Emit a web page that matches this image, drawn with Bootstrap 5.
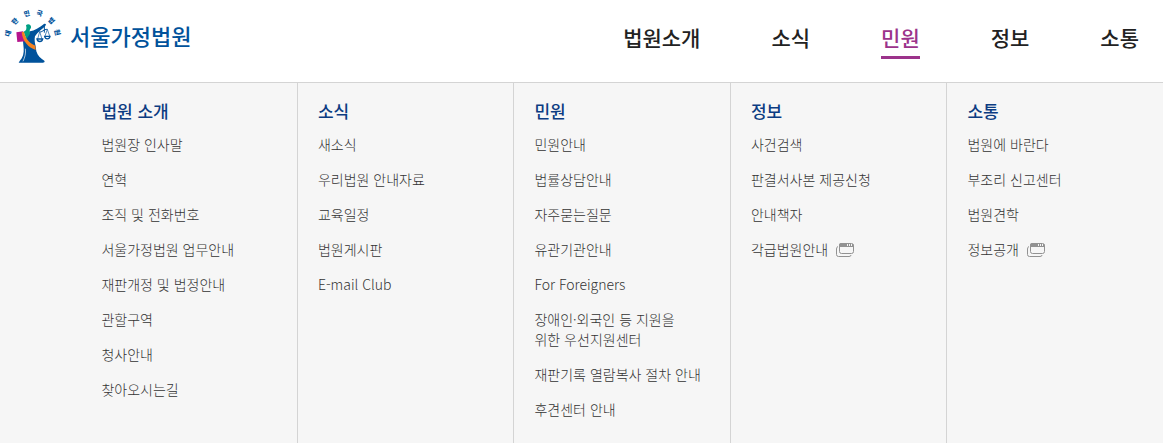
<!DOCTYPE html>
<html lang="ko">
<head>
<meta charset="utf-8">
<meta name="viewport" content="width=device-width, initial-scale=1">
<title>서울가정법원</title>
<link href="https://cdn.jsdelivr.net/npm/bootstrap@5.3.0/dist/css/bootstrap.min.css" rel="stylesheet">
<style>
body { font-family: "Noto Sans CJK KR", sans-serif; font-size: 14px; line-height: 20px; color: #333; }
a { color: inherit; text-decoration: none; }
.site-head { border-bottom: 1px solid #d4d4d4; min-height: 83px; padding: 4px 24px 0 0; }
.brand-name { color: #00529b; font-size: 22px; line-height: 32px; font-weight: 500; padding-bottom: 4px; }
.main-menu { gap: 71px; margin-top: 16px; }
.main-menu a { color: #222; font-size: 21px; line-height: 34px; font-weight: 500; border-bottom: 3px solid transparent; padding-bottom: 2px; display: block; }
.main-menu a.active { color: #9c338b; border-color: #9c338b; }
.sitemap { background: #f6f6f6; padding-left: 7%; }
.map-col { flex: 1 1 0; min-width: 0; padding: 16px 4px 20px 20px; border-right: 1px solid #d4d4d4; }
.map-col:last-child { border-right: 0; }
.map-col h2 { color: #0c3c82; font-size: 17px; line-height: 24px; font-weight: 500; margin-bottom: 11px; }
.map-col ul { display: grid; gap: 15px; }
.map-col li { font-weight: 300; }
.new-win { margin: 1px 0 0 8px; }
</style>
</head>
<body class="d-flex flex-column min-vh-100">
<header class="site-head d-flex justify-content-between align-items-start">
  <a href="#" class="d-flex align-items-center">
    <svg width="70" height="66" viewBox="0 12 210 198" aria-hidden="true">
      <g fill="#00529b" font-size="20" font-weight="900" text-anchor="middle">
        <text transform="translate(31 102) rotate(-75)">대</text>
        <text transform="translate(50 69) rotate(-45)">한</text>
        <text transform="translate(82 48) rotate(-15)">민</text>
        <text transform="translate(117 47) rotate(15)">국</text>
        <text transform="translate(149 67) rotate(45)">법</text>
        <text transform="translate(165 99) rotate(75)">원</text>
      </g>
      <path fill="#00529b" d="M90 94C103 92 118 83 133 71l5 1-2 6c-11 10-22 18-31 31-2 8-1 19 2 30l2 15c4 13 12 21 24 28l1 4-5 2H56l3-5c10-10 13-23 12-38l-2-21z"/>
      <path fill="#00a084" d="M78 76c5-7 17-3 15 7l-4 7 1 11-11 17-8-23c8-2 10-9 7-19z"/>
      <path fill="#b5158c" d="M49 97l20-3 9 30-26 2z"/>
      <path fill="#f58220" d="M65 97l7-2c4 19 14 33 34 42l1 13C85 143 68 124 65 97z"/>
      <path fill="none" stroke="#fff" stroke-width="2" d="M76 146c2 14-1 25-7 38"/>
      <g fill="none" stroke="#00529b" stroke-width="2">
        <path stroke-width="3" d="M133 74v24M119 95c5 4 13-8 23-7"/>
        <path d="M119 95l-6 22M119 95l7 22M142 88l-7 20M142 88l7 20"/>
        <path stroke-width="4" d="M111 117h17c-2 10-15 10-17 0zM134 109h16c-2 10-14 10-16 0z"/>
      </g>
    </svg>
    <span class="brand-name">서울가정법원</span>
  </a>
  <nav aria-label="주 메뉴">
    <ul class="main-menu list-unstyled d-flex mb-0">
      <li><a href="#">법원소개</a></li>
      <li><a href="#">소식</a></li>
      <li><a href="#" class="active">민원</a></li>
      <li><a href="#">정보</a></li>
      <li><a href="#">소통</a></li>
    </ul>
  </nav>
</header>
<svg class="d-none" aria-hidden="true">
  <symbol id="window-icon" viewBox="0 0 18 14">
    <rect x="3.5" y=".5" width="14" height="10" rx="2" fill="#f6f6f6" stroke="#929292"/>
    <path fill="#929292" d="M3 4V2q0-2 2-2h6v3h1V1h1v2h1V1h1v2h1V1h1q1 1 1 3z"/>
    <path fill="none" stroke="#929292" d="M2 3.500Q.5 4 .5 6v5.500q0 2 2 2H13q2 0 2-1.500"/>
  </symbol>
</svg>
<main class="sitemap d-flex flex-grow-1">
  <section class="map-col">
    <h2>법원 소개</h2>
    <ul class="list-unstyled mb-0">
      <li><a href="#">법원장 인사말</a></li>
      <li><a href="#">연혁</a></li>
      <li><a href="#">조직 및 전화번호</a></li>
      <li><a href="#">서울가정법원 업무안내</a></li>
      <li><a href="#">재판개정 및 법정안내</a></li>
      <li><a href="#">관할구역</a></li>
      <li><a href="#">청사안내</a></li>
      <li><a href="#">찾아오시는길</a></li>
    </ul>
  </section>
  <section class="map-col">
    <h2>소식</h2>
    <ul class="list-unstyled mb-0">
      <li><a href="#">새소식</a></li>
      <li><a href="#">우리법원 안내자료</a></li>
      <li><a href="#">교육일정</a></li>
      <li><a href="#">법원게시판</a></li>
      <li><a href="#">E-mail Club</a></li>
    </ul>
  </section>
  <section class="map-col">
    <h2>민원</h2>
    <ul class="list-unstyled mb-0">
      <li><a href="#">민원안내</a></li>
      <li><a href="#">법률상담안내</a></li>
      <li><a href="#">자주묻는질문</a></li>
      <li><a href="#">유관기관안내</a></li>
      <li><a href="#">For Foreigners</a></li>
      <li><a href="#">장애인·외국인 등 지원을<br>위한 우선지원센터</a></li>
      <li><a href="#">재판기록 열람복사 절차 안내</a></li>
      <li><a href="#">후견센터 안내</a></li>
    </ul>
  </section>
  <section class="map-col">
    <h2>정보</h2>
    <ul class="list-unstyled mb-0">
      <li><a href="#">사건검색</a></li>
      <li><a href="#">판결서사본 제공신청</a></li>
      <li><a href="#">안내책자</a></li>
      <li><a href="#" class="d-flex align-items-center">각급법원안내<svg class="new-win" width="18" height="14" role="img" aria-label="새 창"><use href="#window-icon"/></svg></a></li>
    </ul>
  </section>
  <section class="map-col">
    <h2>소통</h2>
    <ul class="list-unstyled mb-0">
      <li><a href="#">법원에 바란다</a></li>
      <li><a href="#">부조리 신고센터</a></li>
      <li><a href="#">법원견학</a></li>
      <li><a href="#" class="d-flex align-items-center">정보공개<svg class="new-win" width="18" height="14" role="img" aria-label="새 창"><use href="#window-icon"/></svg></a></li>
    </ul>
  </section>
</main>
<script src="https://cdn.jsdelivr.net/npm/bootstrap@5.3.0/dist/js/bootstrap.bundle.min.js"></script>
</body>
</html>
